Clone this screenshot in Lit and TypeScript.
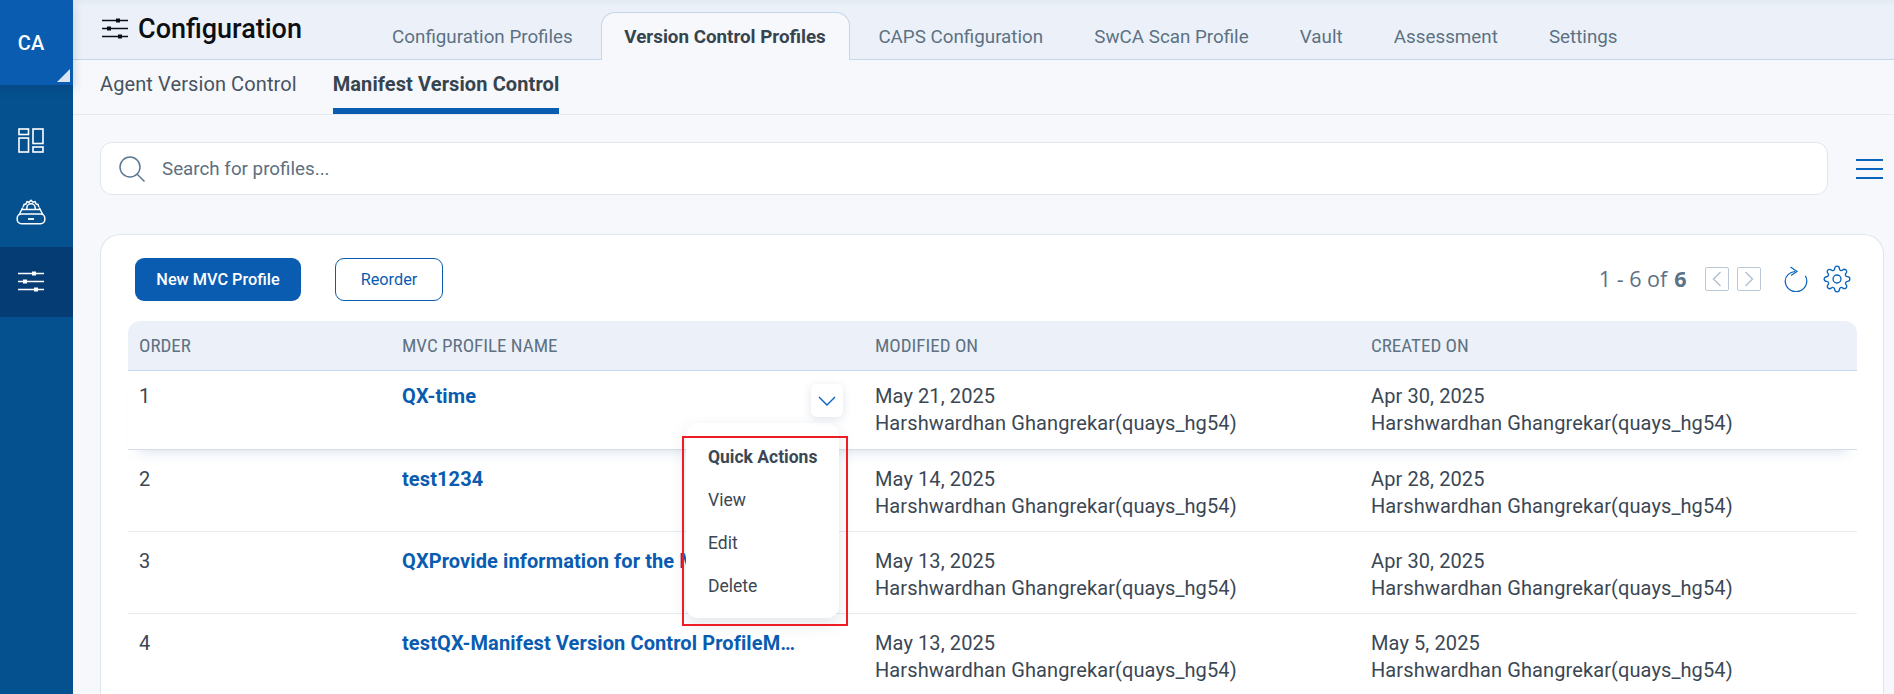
import { LitElement, html, css, svg } from "lit";
import { customElement } from "lit/decorators.js";

const sliders = (size: number) => html`<svg class="sliders" width="${size}" height="${size}" viewBox="0 0 26 26" fill="none" stroke="currentColor">
  <path d="M0 4.5h26M0 12.5h26M0 20.5h26" stroke-width="1.4"/>
  <rect x="14" y="2.5" width="4" height="4" fill="currentColor" stroke="none"/>
  <rect x="5" y="10.5" width="4" height="4" fill="currentColor" stroke="none"/>
  <rect x="16" y="18.5" width="4" height="4" fill="currentColor" stroke="none"/>
</svg>`;

const gear = svg`<path d="M19.4 15a1.65 1.65 0 0 0 .33 1.82l.06.06a2 2 0 0 1 0 2.83 2 2 0 0 1-2.83 0l-.06-.06a1.65 1.65 0 0 0-1.82-.33 1.65 1.65 0 0 0-1 1.51V21a2 2 0 0 1-2 2 2 2 0 0 1-2-2v-.09A1.65 1.65 0 0 0 9 19.4a1.65 1.65 0 0 0-1.82.33l-.06.06a2 2 0 0 1-2.83 0 2 2 0 0 1 0-2.83l.06-.06a1.65 1.65 0 0 0 .33-1.82 1.65 1.65 0 0 0-1.51-1H3a2 2 0 0 1-2-2 2 2 0 0 1 2-2h.09A1.65 1.65 0 0 0 4.6 9a1.65 1.65 0 0 0-.33-1.82l-.06-.06a2 2 0 0 1 0-2.83 2 2 0 0 1 2.83 0l.06.06a1.65 1.65 0 0 0 1.82.33H9a1.65 1.65 0 0 0 1-1.51V3a2 2 0 0 1 2-2 2 2 0 0 1 2 2v.09a1.65 1.65 0 0 0 1 1.51 1.65 1.65 0 0 0 1.82-.33l.06-.06a2 2 0 0 1 2.83 0 2 2 0 0 1 0 2.83l-.06.06a1.65 1.65 0 0 0-.33 1.82V9a1.65 1.65 0 0 0 1.51 1H21a2 2 0 0 1 2 2 2 2 0 0 1-2 2h-.09a1.65 1.65 0 0 0-1.51 1z"/><circle cx="12" cy="12" r="3.4"/>`;

const TABS = ["Configuration Profiles", "Version Control Profiles", "CAPS Configuration", "SwCA Scan Profile", "Vault", "Assessment", "Settings"];
const USER = "Harshwardhan Ghangrekar(quays_hg54)";
const ROWS = [
  { n: "1", name: "QX-time", mod: "May 21, 2025", cre: "Apr 30, 2025" },
  { n: "2", name: "test1234", mod: "May 14, 2025", cre: "Apr 28, 2025" },
  { n: "3", name: "QXProvide information for the Manifest Version Control", mod: "May 13, 2025", cre: "Apr 30, 2025" },
  { n: "4", name: "testQX-Manifest Version Control ProfileManifest Version", mod: "May 13, 2025", cre: "May 5, 2025" },
];

@customElement("app-root")
export class AppRoot extends LitElement {
  static styles = css`
    :host { display: block; height: 694px; overflow: hidden; font-family: Roboto, "Liberation Sans", sans-serif; color: #3b4754; }
    * { box-sizing: border-box; }
    .app { display: flex; height: 694px; background: #f6f8fb; }
    .side { width: 73px; flex: none; background: #05518f; color: #fff; display: flex; flex-direction: column; }
    .brand { height: 85px; flex: none; background: #0a5cb1; position: relative; display: flex; align-items: center; justify-content: center; padding-right: 11px; font-weight: 500; font-size: 20px; box-shadow: 0 4px 10px rgba(0,40,90,.2); }
    .brand i { position: absolute; right: 3px; bottom: 3px; width: 0; height: 0; border-style: solid; border-width: 0 0 13px 13px; border-color: transparent transparent #d9e5f3 transparent; }
    .navlist { display: flex; flex-direction: column; gap: 15px; margin-top: 28px; }
    .nav { height: 56px; display: flex; align-items: center; justify-content: center; padding-right: 11px; }
    .nav.active { background: #063c74; height: 70px; margin-top: -8px; }
    .main { flex: 1; min-width: 0; display: flex; flex-direction: column; }
    .top { height: 60px; flex: none; background: linear-gradient(#e3eaf3 0, #ecf1f9 7px); border-bottom: 1px solid #c3d6ea; display: flex; align-items: flex-end; padding-left: 29px; }
    .title { width: 264.5px; flex: none; align-self: flex-start; height: 59px; display: flex; align-items: center; gap: 10px; color: #0b0f14; font-size: 27px; font-weight: 500; padding-bottom: 1px; }
    .tabs { display: flex; align-items: flex-end; margin-bottom: -1px; }
    .tab { padding: 1px 25.6px 0; height: 48px; display: flex; align-items: center; font-size: 18.8px; color: #5d7183; }
    .tab.on { background: #f6f8fb; border: 1px solid #c3d6ea; border-bottom: none; border-radius: 14px 14px 0 0; padding: 1px 23px 0 22px; color: #36444f; font-weight: 700; margin: 0 3px; }
    .sub { height: 55px; flex: none; border-bottom: 1px solid #e6eaef; display: flex; padding-left: 27px; gap: 36px; }
    .sub div { font-size: 20px; display: flex; align-items: center; height: 54px; color: #47535f; letter-spacing: .1px; padding-bottom: 6px; }
    .sub .on { font-weight: 700; color: #36444f; border-bottom: 6px solid #0a5cb1; padding-bottom: 0; }
    .searchrow { display: flex; align-items: center; margin-top: 27px; padding-left: 27px; }
    .search { width: 1728px; height: 53px; background: #fff; border: 1px solid #e1e6ec; border-radius: 12px; display: flex; align-items: center; padding-left: 18px; gap: 17px; font-size: 18.8px; color: #5d6f80; }
    .burger { margin-left: 28px; display: flex; flex-direction: column; gap: 7px; width: 27px; }
    .burger b { display: block; height: 2px; background: #0a63bd; }
    .card { margin: 39px 0 0 27px; width: 1784px; flex: 1; background: #fff; border: 1px solid #e0e5ec; border-bottom: none; border-radius: 20px 20px 0 0; padding: 22px 26px 0 27px; }
    .toolbar { display: flex; align-items: center; height: 44px; margin-left: 7px; padding-right: 6.5px; }
    .btn { height: 43px; display: flex; align-items: center; justify-content: center; border-radius: 9px; font-size: 16.3px; font-weight: 500; }
    .btn.pri { width: 166px; background: #0a5cb1; color: #fff; margin-right: 34px; }
    .btn.sec { width: 108px; background: #fff; border: 1px solid #0a5cb1; color: #0a5cb1; font-weight: 400; }
    .pager { margin-left: auto; display: flex; align-items: center; font-family: "Open Sans", sans-serif; font-size: 21.5px; color: #5b7186; margin-top: -1px; }
    .pager strong { margin-left: 7px; font-weight: 700; }
    .pg { width: 24px; height: 24px; border: 1px solid #b9c8d6; border-radius: 2px; display: flex; align-items: center; justify-content: center; margin-left: 8px; color: #b0c0ce; }
    .pg.first { margin-left: 18px; }
    .icn { display: flex; color: #0a63bd; }
    .icn.refresh { margin-left: 23px; }
    .icn.gear { margin-left: 15px; }
    .table { margin-top: 20px; position: relative; }
    .row { display: grid; grid-template-columns: 263px 473px 496px 1fr; padding-left: 11px; }
    .row.head { height: 50px; background: #ecf1f9; border-bottom: 1px solid #c3d9ee; border-radius: 12px 12px 0 0; align-items: center; font-size: 19px; color: #5f7282; font-stretch: 75%; }
    .row.body { height: 82px; border-bottom: 1px solid #e7eaee; font-size: 20px; padding-top: 15.5px; line-height: 27px; letter-spacing: .1px; color: #3b4754; }
    .row.hover { height: 79px; padding-top: 12px; border-bottom: 1px solid #d5dde6; box-shadow: 0 12px 12px -10px rgba(90,130,180,.22); position: relative; }
    .name { color: #0a5cb1; font-weight: 700; white-space: nowrap; overflow: hidden; text-overflow: ellipsis; padding-right: 77px; }
    .chev { position: absolute; left: 683px; top: 63px; width: 32px; height: 33px; background: #fff; border-radius: 6px; box-shadow: 0 2px 8px rgba(60,90,130,.16); display: flex; align-items: center; justify-content: center; color: #0a63bd; z-index: 3; }
    .menu { position: absolute; left: 558px; top: 102px; width: 153px; height: 195px; background: #fff; border-radius: 12px; box-shadow: 0 6px 16px rgba(50,70,100,.14); padding: 21px 0 0 22px; display: flex; flex-direction: column; gap: 17px; font-size: 17.5px; line-height: 26px; z-index: 2; }
    .menu b { font-weight: 700; }
    .red { position: absolute; left: 554px; top: 115px; width: 166px; height: 190px; border: 2px solid #ee1c25; z-index: 4; }
  `;

  render() {
    return html`<div class="app">
      <aside class="side">
        <div class="brand"><span>CA</span><i></i></div>
        <div class="navlist">
          <div class="nav">
            <svg width="26" height="26" viewBox="0 0 26 26" fill="none" stroke="#fff" stroke-width="1.6">
              <rect x="1" y="1" width="9.5" height="5.5"/><rect x="1" y="10" width="9.5" height="14"/>
              <rect x="15" y="1" width="10" height="14.5"/><rect x="15" y="19" width="10" height="5"/>
            </svg>
          </div>
          <div class="nav">
            <svg width="30" height="26" viewBox="0 0 30 26" fill="none" stroke="#fff" stroke-width="1.5">
              <rect x="1.2" y="15" width="27.6" height="9.8" rx="4.2"/>
              <path d="M3 16 6.8 8.5M27 16l-3.8-7.5"/>
              <path d="M5.5 10.5h19" />
              <path d="M7.2 8 8 5.5l2-.5 1-2.3 2 .6L15 1.2l2 2 2-.6 1 2.3 2 .5.8 2.6"/>
              <path d="M10.8 10V9a4.2 4.2 0 0 1 8.4 0v1"/>
              <path d="M12 20h6" stroke-width="1.8"/>
            </svg>
          </div>
          <div class="nav active">${sliders(26)}</div>
        </div>
      </aside>
      <div class="main">
        <header class="top">
          <div class="title">${sliders(26)}<span>Configuration</span></div>
          <nav class="tabs">${TABS.map((t, i) => html`<div class="tab ${i === 1 ? "on" : ""}">${t}</div>`)}</nav>
        </header>
        <div class="sub"><div>Agent Version Control</div><div class="on">Manifest Version Control</div></div>
        <div class="searchrow">
          <div class="search">
            <svg width="26" height="26" viewBox="0 0 26 26" fill="none" stroke="#5b7894" stroke-width="1.5"><circle cx="11" cy="11" r="10"/><path d="m18 18 7.5 7.5"/></svg>
            <span>Search for profiles...</span>
          </div>
          <div class="burger"><b></b><b></b><b></b></div>
        </div>
        <section class="card">
          <div class="toolbar">
            <div class="btn pri">New MVC Profile</div>
            <div class="btn sec">Reorder</div>
            <div class="pager">
              <span>1 - 6 of</span><strong>6</strong>
              <div class="pg first"><svg width="10" height="16" viewBox="0 0 10 16" fill="none" stroke="currentColor" stroke-width="1.4"><path d="M8.5 1 1.5 8l7 7"/></svg></div>
              <div class="pg"><svg width="10" height="16" viewBox="0 0 10 16" fill="none" stroke="currentColor" stroke-width="1.4"><path d="m1.5 1 7 7-7 7"/></svg></div>
              <div class="icn refresh"><svg width="24" height="26" viewBox="0 0 24 26" fill="none" stroke="currentColor" stroke-width="1.2"><path d="M11 5.5C5.5 6 1.2 10 1.2 15a10.8 10.8 0 0 0 21.6 0c0-2-.5-3.7-1.5-5.2"/><path d="m6.5 1 6.5 4.5-6 4"/></svg></div>
              <div class="icn gear"><svg width="28" height="28" viewBox="0 0 24 24" fill="none" stroke="currentColor" stroke-width="1.15">${gear}</svg></div>
            </div>
          </div>
          <div class="table">
            <div class="row head"><div>ORDER</div><div>MVC PROFILE NAME</div><div>MODIFIED ON</div><div>CREATED ON</div></div>
            ${ROWS.map((r, i) => html`<div class="row body ${i === 0 ? "hover" : ""}">
              <div>${r.n}</div>
              <div class="name">${r.name}</div>
              <div>${r.mod}<br>${USER}</div>
              <div>${r.cre}<br>${USER}</div>
            </div>`)}
            <div class="chev"><svg width="18" height="10" viewBox="0 0 18 10" fill="none" stroke="currentColor" stroke-width="1.4"><path d="m1 1 8 8 8-8"/></svg></div>
            <div class="menu"><b>Quick Actions</b><span>View</span><span>Edit</span><span>Delete</span></div>
            <div class="red"></div>
          </div>
        </section>
      </div>
    </div>`;
  }
}
